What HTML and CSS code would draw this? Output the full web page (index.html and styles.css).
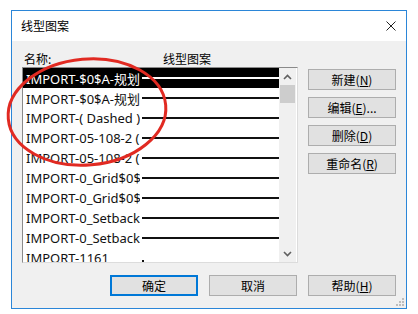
FILE: index.html
```html
<!DOCTYPE html>
<html lang="zh-CN">
    <head>
        <meta charset="UTF-8" />
        <meta name="viewport" content="width=device-width, initial-scale=1.0" />
        <title>线型图案</title>
        <link rel="stylesheet" href="styles.css">
    </head>
    <body>
        <div class="window">
            <div class="titlebar">
                <span class="title">线型图案</span>
                <svg class="close" width="10" height="10" viewBox="0 0 10 10">
                    <path d="M0.5 0.5 L9.5 9.5 M9.5 0.5 L0.5 9.5" stroke="#222" stroke-width="1" fill="none" />
                </svg>
            </div>
            <div class="content">
                <div class="heads">
                    <span class="head-name">名称:</span>
                    <span class="head-pattern">线型图案</span>
                </div>
                <div class="main">
                    <div class="listbox">
                        <ul class="rows">
                            <li class="row selected"><span class="name">IMPORT-$0$A-规划</span><span class="line"></span></li>
                            <li class="row"><span class="name">IMPORT-$0$A-规划</span><span class="line"></span></li>
                            <li class="row"><span class="name">IMPORT-( Dashed )</span><span class="line"></span></li>
                            <li class="row"><span class="name">IMPORT-05-108-2 (</span><span class="line"></span></li>
                            <li class="row"><span class="name">IMPORT-05-108-2 (</span><span class="line"></span></li>
                            <li class="row"><span class="name">IMPORT-0_Grid$0$</span><span class="line"></span></li>
                            <li class="row"><span class="name">IMPORT-0_Grid$0$</span><span class="line"></span></li>
                            <li class="row"><span class="name">IMPORT-0_Setback</span><span class="line"></span></li>
                            <li class="row"><span class="name">IMPORT-0_Setback</span><span class="line"></span></li>
                            <li class="row"><span class="name">IMPORT-1161</span><span class="dots"></span></li>
                        </ul>
                        <div class="scrollbar">
                            <div class="arrow">
                                <svg width="9" height="6" viewBox="0 0 9 6">
                                    <path d="M1 5 L4.5 1.5 L8 5" stroke="#606060" stroke-width="1.6" fill="none" />
                                </svg>
                            </div>
                            <div class="thumb"></div>
                            <div class="track"></div>
                            <div class="arrow">
                                <svg width="9" height="6" viewBox="0 0 9 6">
                                    <path d="M1 1 L4.5 4.5 L8 1" stroke="#606060" stroke-width="1.6" fill="none" />
                                </svg>
                            </div>
                        </div>
                    </div>
                    <div class="side-buttons">
                        <button class="btn">新建(<u>N</u>)</button>
                        <button class="btn">编辑(<u>E</u>)...</button>
                        <button class="btn">删除(<u>D</u>)</button>
                        <button class="btn">重命名(<u>R</u>)</button>
                    </div>
                </div>
                <div class="footer">
                    <button class="btn default">确定</button>
                    <button class="btn">取消</button>
                    <button class="btn">帮助(<u>H</u>)</button>
                </div>
            </div>
            <svg class="grip" width="8" height="8" viewBox="0 0 8 8">
                <rect x="6" y="0" width="2" height="2" fill="#bdbdbd" />
                <rect x="3" y="3" width="2" height="2" fill="#bdbdbd" />
                <rect x="6" y="3" width="2" height="2" fill="#bdbdbd" />
                <rect x="0" y="6" width="2" height="2" fill="#bdbdbd" />
                <rect x="3" y="6" width="2" height="2" fill="#bdbdbd" />
                <rect x="6" y="6" width="2" height="2" fill="#bdbdbd" />
            </svg>
        </div>

        <!-- red annotation circle drawn over the dialog -->
        <svg class="annotation" width="418" height="314" viewBox="0 0 418 314">
            <ellipse cx="87" cy="112" rx="79" ry="53" transform="rotate(-5 87 112)" fill="none" stroke="#e12a22" stroke-width="3" />
        </svg>
    </body>
</html>
```

FILE: styles.css
```css
body {
    margin: 0;
    background: #fff;
    width: 418px;
    height: 314px;
    overflow: hidden;
    position: relative;
    font-family: "Noto Sans CJK SC", sans-serif;
    font-size: 12px;
    color: #000;
}

.window {
    position: relative;
    margin: 10px 0 0 11px;
    width: 396px;
    height: 299px;
    box-sizing: border-box;
    border: 1px solid #2b86d8;
    display: flex;
    flex-direction: column;
}

.titlebar {
    height: 30px;
    background: #fff;
    display: flex;
    align-items: center;
    justify-content: space-between;
    padding: 0 10px 0 9px;
    flex-shrink: 0;
}
.title {
    font-size: 12px;
    line-height: 14px;
}

.content {
    flex-grow: 1;
    background: #f0f0f0;
    padding: 9px 10px 0 10px;
}

.heads {
    height: 17px;
    display: flex;
    align-items: center;
    padding-left: 2px;
    line-height: 14px;
}
.head-name {
    width: 139px;
}

.main {
    display: flex;
    gap: 10px;
}

.listbox {
    width: 276px;
    height: 196px;
    box-sizing: border-box;
    border: 1px solid #dcdcdc;
    border-top-color: #8a8a8a;
    border-left-color: #8a8a8a;
    background: #fff;
    display: flex;
    overflow: hidden;
}

.rows {
    list-style-type: none;
    margin: 0;
    padding: 0;
    width: 256px;
    flex-shrink: 0;
    font-family: "Noto Sans", "Noto Sans CJK SC", sans-serif;
    font-size: 13px;
}
.row {
    height: 20px;
    display: flex;
    align-items: center;
    padding-left: 3px;
    color: #111;
}
.row > .name {
    width: 114px;
    margin-right: 2px;
    white-space: nowrap;
    overflow: hidden;
    flex-shrink: 0;
}
.row > .line {
    flex-grow: 1;
    height: 2px;
    background: #111;
}
.row > .dots {
    flex-grow: 1;
    height: 2px;
    margin-top: 6px;
    background: linear-gradient(to right, #111 0 2px, transparent 2px);
    background-size: 400px 2px;
    background-repeat: no-repeat;
}
.row.selected {
    background: #000;
    color: #fff;
}
.row.selected > .line {
    background: #fff;
}

.scrollbar {
    width: 17px;
    flex-shrink: 0;
    background: #f0f0f0;
    display: flex;
    flex-direction: column;
    align-items: center;
}
.scrollbar > .arrow {
    height: 17px;
    width: 17px;
    display: flex;
    align-items: center;
    justify-content: center;
}
.scrollbar > .thumb {
    width: 15px;
    height: 18px;
    background: #cdcdcd;
}
.scrollbar > .track {
    flex-grow: 1;
}

.side-buttons {
    margin-top: 2px;
    display: flex;
    flex-direction: column;
    gap: 7px;
}

.btn {
    width: 88px;
    height: 21px;
    box-sizing: border-box;
    background: #e1e1e1;
    border: 1px solid #adadad;
    padding: 0;
    font-family: "Noto Sans CJK SC", sans-serif;
    font-size: 12px;
    line-height: 17px;
    color: #000;
}
.btn > u {
    text-underline-offset: 1px;
}
.btn.default {
    border-color: #0078d7;
    box-shadow: inset 0 0 0 1px #0078d7;
}

.footer {
    margin-top: 12px;
    display: flex;
    justify-content: flex-end;
    gap: 11px;
}

.grip {
    position: absolute;
    right: 2px;
    bottom: 2px;
}

.annotation {
    position: absolute;
    left: 0;
    top: 0;
    pointer-events: none;
}
```
